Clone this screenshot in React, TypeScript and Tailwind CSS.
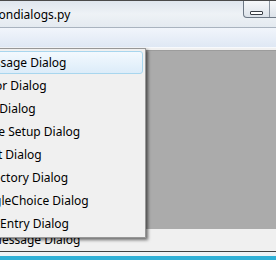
import React from 'react';

const ITEMS = [
  'Message Dialog',
  'Color Dialog',
  'File Dialog',
  'Page Setup Dialog',
  'Font Dialog',
  'Directory Dialog',
  'SingleChoice Dialog',
  'TextEntry Dialog',
];

const App: React.FC = () => {
  return (
    <div className="relative w-[276px] h-[260px] overflow-hidden bg-[#f0f0f0] text-[12px] text-black font-['Segoe_UI','Noto_Sans',sans-serif]">
      {/* Title bar */}
      <div className="relative h-[27px] border-t border-[#4a4a4a] bg-gradient-to-b from-[#dfe6ee] via-[#eef2f6] to-[#e4eaf0] flex items-center">
        <span className="ml-[-37px] mt-[2px] text-[12px] text-black whitespace-nowrap">commondialogs.py</span>
        <div className="absolute top-0 left-[243px] w-[40px] h-[17px] border border-t-0 border-[#6d7885] rounded-bl-[4px] bg-gradient-to-b from-[#f6f8fa] to-[#dde3ea] flex">
          <div className="w-[26px] h-full border-r border-[#8a939e] flex items-end justify-center pb-[2px]">
            <div className="w-[13px] h-[4px] border border-[#3a3f46] bg-white rounded-[1px]" />
          </div>
        </div>
      </div>
      <div className="h-px bg-[#a9b3bf]" />

      {/* Menu bar */}
      <div className="h-[19px] bg-gradient-to-b from-[#f1f5fb] to-[#dfe8f4]" />
      <div className="h-px bg-[#f7f9fc]" />

      {/* Content */}
      <div className="h-[2px]" />
      <div className="h-[179px] bg-[#ababab] border-t border-[#9c9c9c]" />
      <div className="h-[22px] flex items-end pb-[2px]">
        <span className="ml-[-9px] whitespace-nowrap">Message Dialog</span>
      </div>
      <div className="h-px bg-[#404040]" />
      <div className="h-[4px] bg-[#eef3f6]" />
      <div className="h-[4px] bg-[#2fb0d6]" />

      {/* Popup menu */}
      <div className="absolute top-[48px] left-[-40px] w-[186px] h-[190px] bg-[#f0f0f0] border border-[#979797] shadow-[2px_2px_3px_rgba(0,0,0,0.55)] p-[2px]">
        {ITEMS.map((label, i) => (
          <div
            key={label}
            className={`h-[23px] flex items-center pl-[13px] whitespace-nowrap rounded-[3px] border ${
              i === 0
                ? 'border-[#a8d6ee] bg-gradient-to-b from-[#f3f9fe] to-[#dcecf9]'
                : 'border-transparent'
            }`}
          >
            {label}
          </div>
        ))}
      </div>
    </div>
  );
};

export default App;
